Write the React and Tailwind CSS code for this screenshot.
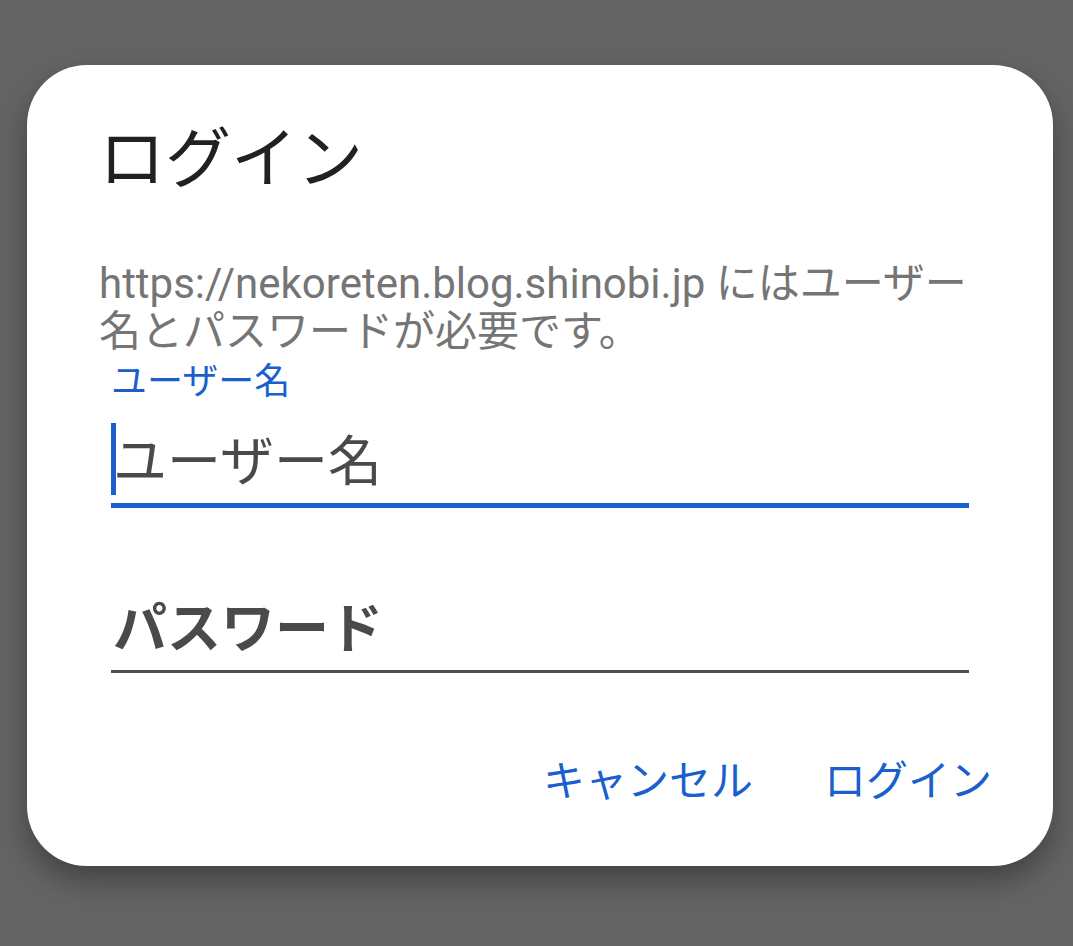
export default function App() {
  const font = { fontFamily: 'Roboto, "Noto Sans CJK JP", sans-serif' };
  return (
    <div className="w-[1073px] h-[946px] bg-[#646464] overflow-hidden pt-[65px] pl-[27px]" style={font}>
      <div className="w-[1026px] h-[801px] bg-white rounded-[60px] shadow-[0_14px_30px_rgba(0,0,0,0.35)] flex flex-col pt-[62px] pl-[72px] pr-[84px]">
        {/* Title */}
        <h1 className="text-[66px] leading-none text-[#212121]">ログイン</h1>

        {/* Message */}
        <p className="mt-[67px] text-[42px] leading-[48px] text-[#757575] whitespace-nowrap">
          https://nekoreten.blog.shinobi.jp にはユーザー
          <br />
          名とパスワードが必要です。
        </p>

        {/* Username */}
        <div className="ml-[12px] flex flex-col">
          <label className="mt-[6px] text-[36px] leading-[40px] text-[#1a5fcc]">ユーザー名</label>
          <div className="relative mt-[21px] h-[85px] flex items-center border-b-[5px] border-[#1a5fcc]">
            <span className="absolute left-0 top-0 w-[5px] h-[72px] bg-[#1a5fcc]" />
            <span className="text-[54px] leading-none text-[#4a4a4a] pl-[2px]">ユーザー名</span>
          </div>
        </div>

        {/* Password */}
        <div className="ml-[12px] mt-[82px] h-[83px] flex items-center border-b-[3px] border-[#4d4d4d]">
          <span className="text-[54px] leading-none font-bold text-[#4a4a4a] pl-[2px]">パスワード</span>
        </div>

        {/* Actions */}
        <div className="mt-[88px] flex justify-end gap-[71px] -mr-[23px]">
          <button className="text-[42px] leading-none text-[#1a5fcc]">キャンセル</button>
          <button className="text-[42px] leading-none text-[#1a5fcc]">ログイン</button>
        </div>
      </div>
    </div>
  );
}
